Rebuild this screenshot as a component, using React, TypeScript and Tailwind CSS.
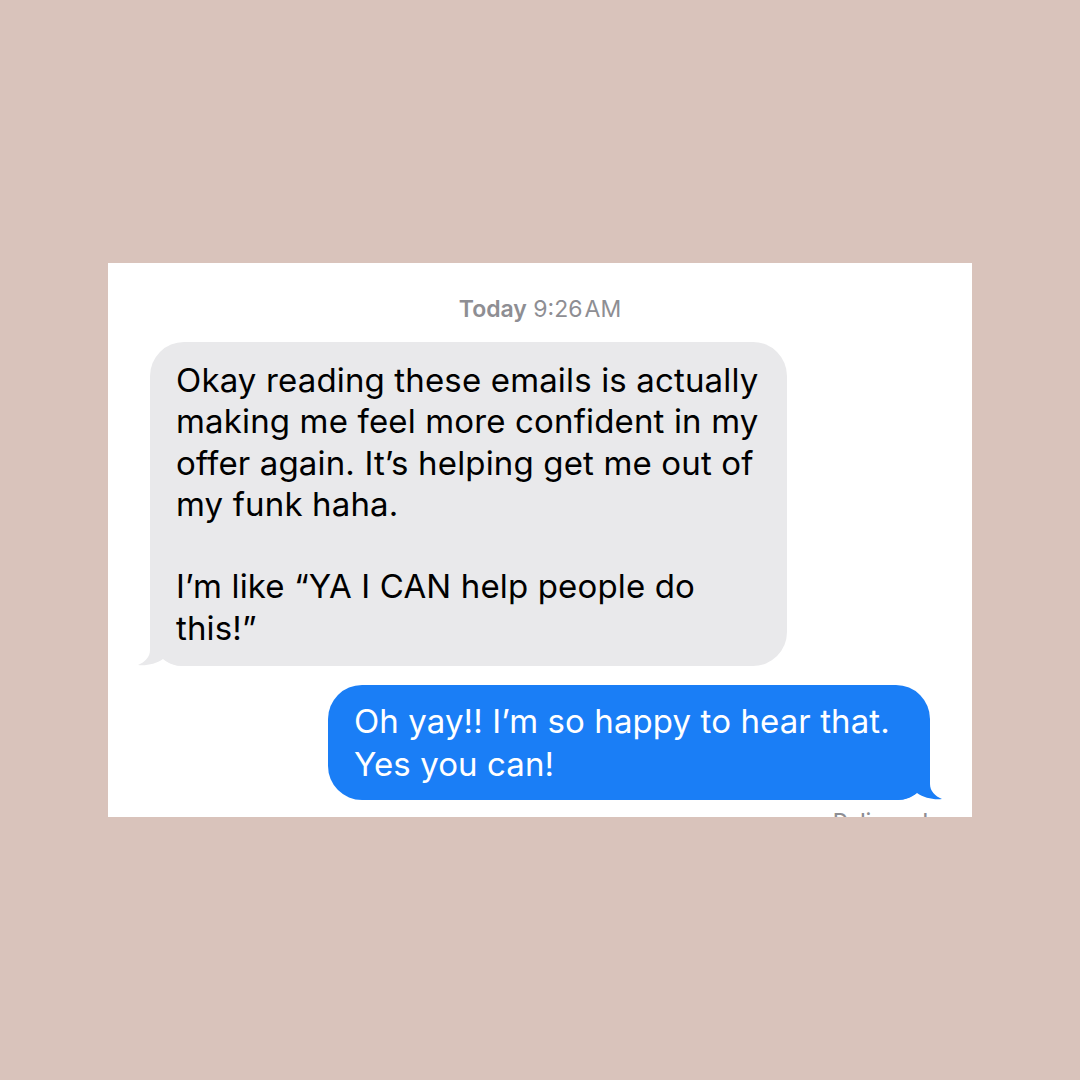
import React from 'react'

// tails cover the bubble's bottom corner and flick out to a point
const GreyTail = () => (
  <svg className="absolute -left-[12px] bottom-0" width="52" height="40" viewBox="0 0 52 40">
    <path
      d="M52 0 H12 V24 C12 31 7 36 0 39 C8 40 18 38 25 33 C30 37 36 40 44 40 H52 Z"
      fill="#e9e9eb"
    />
  </svg>
)

const BlueTail = () => (
  <svg className="absolute -right-[12px] bottom-0" width="52" height="40" viewBox="0 0 52 40">
    <path
      d="M0 0 H40 V24 C40 31 45 36 52 39 C44 40 34 38 27 33 C22 37 16 40 8 40 H0 Z"
      fill="#1a7ef6"
    />
  </svg>
)

export default function App() {
  return (
    <div
      className="w-[1080px] h-[1080px] bg-[#d9c3bb] flex items-center justify-center"
      style={{ fontFamily: 'Inter, "Noto Sans", sans-serif' }}
    >
      <div className="w-[864px] h-[554px] bg-white overflow-hidden flex flex-col px-[42px] pt-[32px]">
        {/* timestamp */}
        <div className="text-center text-[23px] leading-[28px] text-[#8e8e93]">
          <span className="font-semibold">Today</span>&nbsp;9:26&#8202;AM
        </div>

        {/* incoming */}
        <div className="mt-[19px] flex">
          <div className="relative w-[637px] h-[324px] rounded-[34px] bg-[#e9e9eb] px-[26px] pt-[18px]">
            <GreyTail />
            <p className="relative text-[33px] leading-[41.3px] text-black tracking-[0.15px] whitespace-nowrap">
              Okay reading these emails is actually
              <br />
              making me feel more confident in my
              <br />
              offer again. It’s helping get me out of
              <br />
              my funk haha.
              <br />
              <br />
              I’m like “YA I CAN help people do
              <br />
              this!”
            </p>
          </div>
        </div>

        {/* outgoing */}
        <div className="mt-[19px] flex justify-end">
          <div className="relative w-[602px] h-[115px] rounded-[34px] bg-[#1a7ef6] px-[26px] pt-[15px]">
            <BlueTail />
            <p className="relative text-[33px] leading-[43px] text-white tracking-[0.1px] whitespace-nowrap">
              Oh yay!! I’m so happy to hear that.
              <br />
              Yes you can!
            </p>
          </div>
        </div>

        <div className="mt-[10px] flex justify-end pr-[2px] text-[21px] leading-[24px] text-[#8e8e93] font-medium">
          Delivered
        </div>
      </div>
    </div>
  )
}
